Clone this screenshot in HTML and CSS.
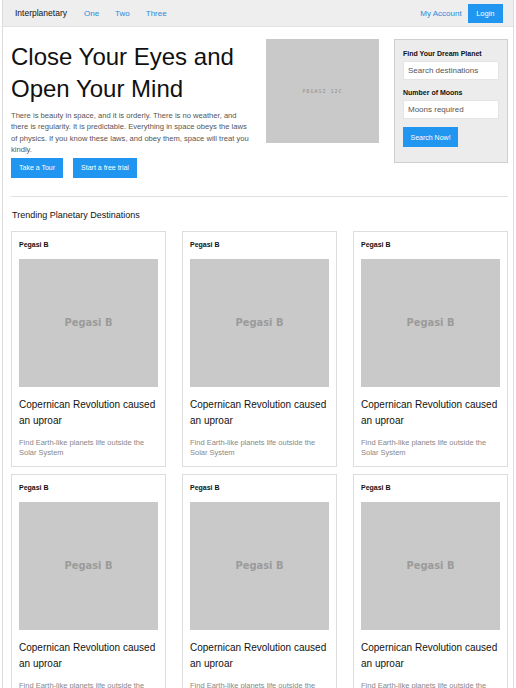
FILE: index.html
```html
<!DOCTYPE html>
<html lang="en">
<head>
<meta charset="utf-8">
<title>Interplanetary</title>
<link rel="stylesheet" href="styles.css">
</head>
<body>
<div class="frame">
  <nav class="nav">
    <span class="brand">Interplanetary</span>
    <a class="nav-link" href="#">One</a>
    <a class="nav-link" href="#">Two</a>
    <a class="nav-link" href="#">Three</a>
    <span class="spacer"></span>
    <a class="nav-link account" href="#">My Account</a>
    <a class="btn btn-login" href="#">Login</a>
  </nav>
  <main class="content">
    <section class="hero">
      <div class="hero-text">
        <h1 class="hero-title">Close Your Eyes and Open Your Mind</h1>
        <p class="hero-copy">There is beauty in space, and it is orderly. There is no weather, and there is regularity. It is predictable. Everything in space obeys the laws of physics. If you know these laws, and obey them, space will treat you kindly.</p>
        <div class="actions">
          <a class="btn" href="#">Take a Tour</a>
          <a class="btn" href="#">Start a free trial</a>
        </div>
      </div>
      <div class="hero-img"><span>PEGASI 12C</span></div>
      <form class="search">
        <label class="field-label">Find Your Dream Planet</label>
        <input class="field" type="text" placeholder="Search destinations">
        <label class="field-label">Number of Moons</label>
        <input class="field" type="text" placeholder="Moons required">
        <button class="btn btn-search" type="button">Search Now!</button>
      </form>
    </section>
    <hr class="divider">
    <h2 class="section-title">Trending Planetary Destinations</h2>
    <div class="cards">
      <article class="card">
        <div class="card-label">Pegasi B</div>
        <div class="card-img">Pegasi B</div>
        <h3 class="card-title">Copernican Revolution caused an uproar</h3>
        <p class="card-text">Find Earth-like planets life outside the Solar System</p>
      </article>
      <article class="card">
        <div class="card-label">Pegasi B</div>
        <div class="card-img">Pegasi B</div>
        <h3 class="card-title">Copernican Revolution caused an uproar</h3>
        <p class="card-text">Find Earth-like planets life outside the Solar System</p>
      </article>
      <article class="card">
        <div class="card-label">Pegasi B</div>
        <div class="card-img">Pegasi B</div>
        <h3 class="card-title">Copernican Revolution caused an uproar</h3>
        <p class="card-text">Find Earth-like planets life outside the Solar System</p>
      </article>
      <article class="card">
        <div class="card-label">Pegasi B</div>
        <div class="card-img">Pegasi B</div>
        <h3 class="card-title">Copernican Revolution caused an uproar</h3>
        <p class="card-text">Find Earth-like planets life outside the Solar System</p>
      </article>
      <article class="card">
        <div class="card-label">Pegasi B</div>
        <div class="card-img">Pegasi B</div>
        <h3 class="card-title">Copernican Revolution caused an uproar</h3>
        <p class="card-text">Find Earth-like planets life outside the Solar System</p>
      </article>
      <article class="card">
        <div class="card-label">Pegasi B</div>
        <div class="card-img">Pegasi B</div>
        <h3 class="card-title">Copernican Revolution caused an uproar</h3>
        <p class="card-text">Find Earth-like planets life outside the Solar System</p>
      </article>
    </div>
  </main>
</div>
</body>
</html>
```

FILE: styles.css
```css
* { box-sizing: border-box; }

html, body {
  margin: 0;
  padding: 0;
  background: #ffffff;
}

body {
  font-family: "Liberation Sans", Arial, sans-serif;
  color: #111;
  overflow: hidden;
}

.frame {
  margin-left: 2px;
  width: 512px;
  border-left: 1px solid #dcdcdc;
  border-right: 1px solid #dcdcdc;
}

/* NAV */
.nav {
  display: flex;
  align-items: center;
  height: 27px;
  padding: 0 10px 0 12px;
  background: #eeeeee;
  border-bottom: 1px solid #e2e2e2;
  gap: 16px;
  font-size: 8px;
}

.brand {
  font-size: 8.5px;
  color: #111;
  margin-right: 1px;
}

.nav-link {
  color: #2a8bdc;
  text-decoration: none;
}

.spacer { flex: 1; }

.account { margin-right: -10px; }

.btn {
  display: inline-flex;
  align-items: center;
  justify-content: center;
  height: 20px;
  padding: 0 8px;
  background: #2196f0;
  color: #ffffff;
  font-family: "Liberation Sans", Arial, sans-serif;
  font-size: 7px;
  text-decoration: none;
  border: none;
}

.btn-login {
  height: 19px;
  padding: 0 8.5px;
  font-size: 7.5px;
}

/* CONTENT */
.content {
  padding: 12px 5px 0 8px;
}

.hero {
  display: grid;
  grid-template-columns: 1fr 113px 114px;
  column-gap: 15px;
  align-items: start;
}

.hero-title {
  margin: 2px 0 0;
  font-size: 24px;
  line-height: 32px;
  font-weight: normal;
  color: #111;
}

.hero-copy {
  margin: 5px 0 0;
  font-size: 7.6px;
  line-height: 11.4px;
  color: #555;
}

.actions {
  display: flex;
  gap: 10px;
  margin-top: 2px;
}

.hero-img {
  height: 104px;
  background: #c9c9c9;
  display: flex;
  align-items: center;
  justify-content: center;
}

.hero-img span {
  font-size: 5px;
  letter-spacing: 1px;
  color: #8a8a8a;
  font-family: "DejaVu Sans Mono", monospace;
}

.search {
  display: flex;
  flex-direction: column;
  align-items: flex-start;
  background: #ececec;
  border: 1px solid #cfcfcf;
  padding: 9px 8px 15px;
  height: 124px;
}

.field-label {
  font-size: 7px;
  font-weight: bold;
  color: #111;
  line-height: 10px;
}

.field {
  width: 100%;
  height: 19px;
  margin: 2px 0 8px;
  border: 1px solid #e4e4e4;
  background: #fff;
  padding: 0 4px;
  font-family: "Liberation Sans", Arial, sans-serif;
  font-size: 8px;
  color: #555;
}

.field::placeholder { color: #555; }

.btn-search {
  padding: 0 7.5px;
}

.divider {
  margin: 18px 0 0;
  border: none;
  border-top: 1px solid #e0e0e0;
}

.section-title {
  margin: 12px 0 0 1px;
  font-size: 9px;
  line-height: 12px;
  font-weight: normal;
  color: #111;
}

/* CARDS */
.cards {
  display: grid;
  grid-template-columns: repeat(3, 1fr);
  column-gap: 16px;
  row-gap: 7px;
  margin: 10px 0 0;
}

.card {
  border: 1px solid #dddddd;
  padding: 7px 7px 7px;
}

.card-label {
  font-size: 7px;
  font-weight: bold;
  line-height: 12px;
  color: #111;
}

.card-img {
  margin-top: 8px;
  height: 128px;
  background: #c9c9c9;
  display: flex;
  align-items: center;
  justify-content: center;
  font-family: "DejaVu Sans Condensed", "DejaVu Sans", sans-serif;
  font-weight: bold;
  font-size: 11px;
  color: #9b9b9b;
}

.card-title {
  margin: 10px 0 0;
  font-size: 10px;
  line-height: 16.5px;
  font-weight: normal;
  color: #111;
}

.card-text {
  margin: 8px 0 0;
  font-size: 7.5px;
  line-height: 10.5px;
  color: #888;
}
```
